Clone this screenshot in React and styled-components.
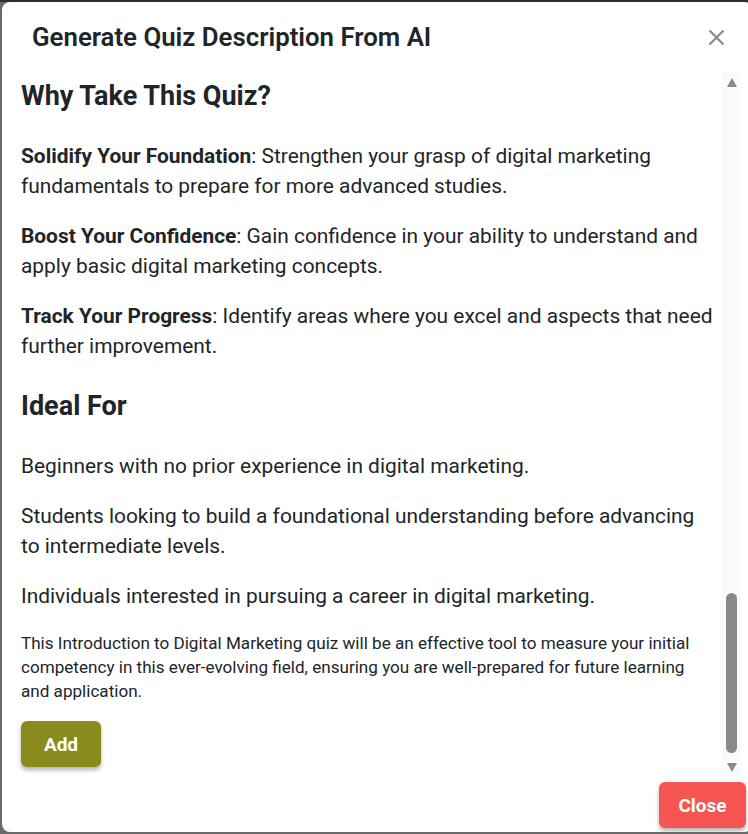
import React from 'react';
import styled, { createGlobalStyle } from 'styled-components';

const GlobalStyle = createGlobalStyle`
  html, body {
    margin: 0;
    padding: 0;
    overflow: hidden;
  }
  body {
    background: #5e6063;
    font-family: Roboto, "Liberation Sans", Arial, sans-serif;
    color: #212529;
  }
`;

const Backdrop = styled.div`
  width: 748px;
  height: 834px;
  padding: 2px 0 2px 2px;
  box-sizing: border-box;
  background: linear-gradient(#2b2f33 0 2px, #6a6a6a 2px);
`;

const Dialog = styled.div`
  width: 750px;
  height: 830px;
  background: #fff;
  border-radius: 8px;
  display: flex;
  flex-direction: column;
  overflow: hidden;
`;

const Header = styled.div`
  height: 70px;
  flex: none;
  display: flex;
  align-items: center;
  justify-content: space-between;
  padding: 0 27px 0 30px;
  box-sizing: border-box;
`;

const Title = styled.h2`
  margin: 0;
  font-size: 25.8px;
  font-weight: 600;
  color: #212529;
`;

const CloseIcon = styled.button`
  border: 0;
  background: none;
  padding: 0;
  width: 18px;
  height: 18px;
  display: flex;
  align-items: center;
  justify-content: center;
  cursor: pointer;
`;

const BodyRow = styled.div`
  height: 703px;
  flex: none;
  display: flex;
`;

const Content = styled.div`
  flex: 1;
  padding: 8px 6px 0 19px;
  overflow: hidden;
`;

const Heading = styled.h3`
  margin: 29px 0;
  font-size: 27px;
  line-height: 32px;
  font-weight: 700;
  color: #212529;

  &:first-child {
    margin-top: 0;
  }
`;

const Para = styled.p`
  margin: 20px 0;
  font-size: 20.9px;
  line-height: 30px;
  color: #212529;

  strong {
    font-weight: 700;
  }
`;

const Note = styled.p`
  margin: 19px 0 18px;
  font-size: 17.1px;
  line-height: 24px;
  color: #212529;
`;

const Button = styled.button`
  border: 0;
  border-radius: 6px;
  height: 46px;
  width: ${(p) => p.$w}px;
  padding: 0;
  background: ${(p) => p.$bg};
  color: #fff;
  font-family: Roboto, "Liberation Sans", Arial, sans-serif;
  font-size: 19px;
  font-weight: 700;
  box-shadow: 0 3px 4px rgba(0, 0, 0, 0.3);
  cursor: pointer;
`;

const ScrollTrack = styled.div`
  width: 19px;
  flex: none;
  background: #fafafa;
  display: flex;
  flex-direction: column;
  align-items: center;
  margin-right: 11px;
`;

const Arrow = styled.div`
  width: 0;
  height: 0;
  border-left: 5.5px solid transparent;
  border-right: 5.5px solid transparent;
  ${(p) =>
    p.$down
      ? 'border-top: 9px solid #8a8a8a; margin: 9px 0 3px;'
      : 'border-bottom: 9px solid #8a8a8a; margin: 6px 0 0;'}
`;

const ThumbArea = styled.div`
  flex: 1;
  width: 100%;
  display: flex;
  justify-content: center;
`;

const Thumb = styled.div`
  width: 11px;
  border-radius: 6px;
  background: #8a8a8a;
`;

const Footer = styled.div`
  flex: 1;
  display: flex;
  justify-content: flex-end;
  align-items: flex-start;
  padding: 7px 6px 0 0;
`;

export default function App() {
  return (
    <>
      <GlobalStyle />
      <Backdrop>
        <Dialog>
          <Header>
            <Title>Generate Quiz Description From AI</Title>
            <CloseIcon aria-label="close">
              <svg width="17" height="17" viewBox="0 0 17 17">
                <path d="M1.5 1.5 L15.5 15.5 M15.5 1.5 L1.5 15.5" stroke="#8a8a8a" strokeWidth="2.2" />
              </svg>
            </CloseIcon>
          </Header>
          <BodyRow>
            <Content>
              <Heading>Why Take This Quiz?</Heading>
              <Para>
                <strong>Solidify Your Foundation</strong>: Strengthen your grasp of digital marketing
                fundamentals to prepare for more advanced studies.
              </Para>
              <Para>
                <strong>Boost Your Confidence</strong>: Gain confidence in your ability to understand and
                apply basic digital marketing concepts.
              </Para>
              <Para>
                <strong>Track Your Progress</strong>: Identify areas where you excel and aspects that need
                further improvement.
              </Para>
              <Heading>Ideal For</Heading>
              <Para>Beginners with no prior experience in digital marketing.</Para>
              <Para>
                Students looking to build a foundational understanding before advancing to intermediate
                levels.
              </Para>
              <Para>Individuals interested in pursuing a career in digital marketing.</Para>
              <Note>
                This Introduction to Digital Marketing quiz will be an effective tool to measure your initial
                competency in this ever-evolving field, ensuring you are well-prepared for future learning
                and application.
              </Note>
              <Button $bg="#8b8a1c" $w={80}>Add</Button>
            </Content>
            <ScrollTrack>
              <Arrow />
              <ThumbArea>
                <Thumb style={{ marginTop: 506, height: 160 }} />
              </ThumbArea>
              <Arrow $down />
            </ScrollTrack>
          </BodyRow>
          <Footer>
            <Button $bg="#f65552" $w={87}>Close</Button>
          </Footer>
        </Dialog>
      </Backdrop>
    </>
  );
}
